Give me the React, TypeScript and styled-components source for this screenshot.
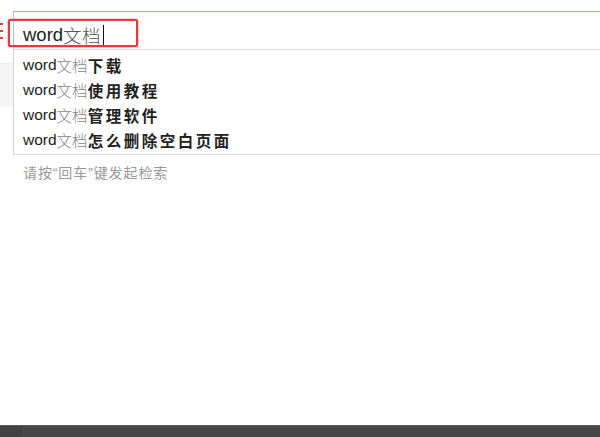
import React from "react";
import styled, { createGlobalStyle } from "styled-components";

const Global = createGlobalStyle`
  html, body { margin: 0; padding: 0; background: #fff; }
  body { font-family: "Liberation Sans", "Noto Sans CJK SC", sans-serif; }
  * { box-sizing: border-box; }
`;

const Page = styled.div`
  width: 600px;
  height: 437px;
  display: flex;
  flex-direction: column;
  overflow: hidden;
`;

const Main = styled.div`
  flex: 1;
  display: grid;
  grid-template-columns: 13px 1fr;
`;

const Gutter = styled.div`
  display: flex;
  flex-direction: column;
  padding-top: 23px;
`;

const Dashes = styled.div`
  display: flex;
  flex-direction: column;
  gap: 5px;
  width: 3px;
`;

const Dash = styled.span`
  display: block;
  height: 2px;
  background: #e8393d;
`;

const GrayBlock = styled.div`
  margin-top: 24px;
  height: 44px;
  background: #f5f5f5;
  border-top: 1px solid #ececec;
`;

const SearchArea = styled.div`
  position: relative;
  padding-top: 11px;
  display: flex;
  flex-direction: column;
`;

const InputBox = styled.div`
  height: 39px;
  border-top: 1px solid #8db6f2;
  border-left: 1px solid #a6c6f0;
  border-bottom: 1px solid #d8d8d8;
  padding: 9px 0 0 9px;
  display: flex;
  align-items: center;
`;

const InputText = styled.span`
  font-size: 18.5px;
  line-height: 22px;
  color: #222;
  display: flex;
  align-items: center;
`;

const Latin = styled.span`
  font-family: "Liberation Sans", sans-serif;
`;

const Cjk = styled.span<{ $tone?: "light" | "bold" | "input" }>`
  font-family: "Noto Sans CJK SC", sans-serif;
  color: ${(p) => (p.$tone === "light" ? "#858585" : p.$tone === "input" ? "#555" : "#222")};
  font-weight: ${(p) => (p.$tone === "bold" ? 700 : 300)};
  letter-spacing: ${(p) => (p.$tone === "bold" ? "2.5px" : p.$tone === "input" ? "0.5px" : "0")};
`;

const Caret = styled.span`
  display: inline-block;
  width: 1px;
  height: 21px;
  background: #111;
  margin-left: 2px;
`;

const Highlight = styled.div`
  position: absolute;
  left: -5px;
  top: 19px;
  width: 130px;
  height: 28px;
  border: 2px solid #e8383d;
  border-radius: 2px;
  box-shadow: 0 0 0 0.5px rgba(232, 56, 61, 0.5);
  pointer-events: none;
`;

const Dropdown = styled.ul`
  list-style: none;
  margin: 0;
  padding: 2px 0 1px 9px;
  border-left: 1px solid #d4d4d4;
  border-bottom: 1px solid #d8d8d8;
`;

const Row = styled.li`
  height: 25.2px;
  display: flex;
  align-items: center;
  font-size: 15.5px;
  color: #1e1e1e;
  white-space: nowrap;
`;

const Hint = styled.div`
  margin-top: 10px;
  padding-left: 10px;
  font-family: "Liberation Sans", "Noto Sans CJK SC", sans-serif;
  font-size: 14px;
  letter-spacing: 0.9px;
  line-height: 17px;
  color: #999;
`;

const Footer = styled.div`
  height: 12px;
  background: #474747;
  border-top: 1px solid #5c5c5c;
  display: grid;
  grid-template-columns: 22px 1fr;
`;

const FooterLeft = styled.div`
  background: #414141;
`;

const suggestions = ["下载", "使用教程", "管理软件", "怎么删除空白页面"];

export default function App() {
  return (
    <Page>
      <Global />
      <Main>
        <Gutter>
          <Dashes>
            <Dash />
            <Dash />
            <Dash />
          </Dashes>
          <GrayBlock />
        </Gutter>
        <SearchArea>
          <InputBox>
            <InputText>
              <Latin>word</Latin>
              <Cjk $tone="input">文档</Cjk>
              <Caret />
            </InputText>
          </InputBox>
          <Dropdown>
            {suggestions.map((s) => (
              <Row key={s}>
                <Latin>word</Latin>
                <Cjk $tone="light">文档</Cjk>
                <Cjk $tone="bold">{s}</Cjk>
              </Row>
            ))}
          </Dropdown>
          <Hint>请按“回车”键发起检索</Hint>
          <Highlight />
        </SearchArea>
      </Main>
      <Footer>
        <FooterLeft />
        <div />
      </Footer>
    </Page>
  );
}
